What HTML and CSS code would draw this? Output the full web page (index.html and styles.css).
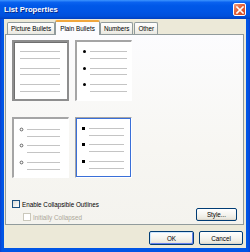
FILE: index.html
```html
<!DOCTYPE html>
<html>
<head>
<meta charset="utf-8">
<link rel="stylesheet" href="styles.css">
</head>
<body>
<div class="window">
  <div class="titlebar">
    <span class="title">List Properties</span>
    <span class="close">
      <svg width="8" height="8" viewBox="0 0 8 8"><path d="M1 1 L7 7 M7 1 L1 7" stroke="#fff" stroke-width="1.6" stroke-linecap="square"/></svg>
    </span>
  </div>
  <div class="client">
    <div class="tabs">
      <div class="tab">Picture Bullets</div>
      <div class="tab active">Plain Bullets</div>
      <div class="tab">Numbers</div>
      <div class="tab">Other</div>
    </div>
    <div class="panel">
      <div class="grid">
        <div class="box box-none">
          <svg width="53" height="57" viewBox="0 0 53 57">
            <g stroke="#c4c4c4" stroke-width="1">
              <path d="M6 9.5H46M6 16.5H46M6 26.5H46M6 32.5H46M6 42.5H46M6 49.5H46"/>
            </g>
          </svg>
        </div>
        <div class="box box-sunken">
          <svg width="54" height="58" viewBox="0 0 54 58">
            <g stroke="#c4c4c4" stroke-width="1">
              <path d="M13 9.5H50M13 16.5H50M13 26.5H50M13 32.5H50M13 42.5H50M13 49.5H50"/>
            </g>
            <g fill="#000">
              <circle cx="7.5" cy="9.5" r="1.5"/>
              <circle cx="7.5" cy="26.5" r="1.5"/>
              <circle cx="7.5" cy="42.5" r="1.5"/>
            </g>
          </svg>
        </div>
        <div class="box box-sunken">
          <svg width="54" height="58" viewBox="0 0 54 58">
            <g stroke="#c4c4c4" stroke-width="1">
              <path d="M13 10.5H46M13 17.5H46M13 26.5H46M13 33.5H46M13 43.5H46M13 50.5H46"/>
            </g>
            <g fill="none" stroke="#555" stroke-width="0.9">
              <circle cx="7.5" cy="10.5" r="1.4"/>
              <circle cx="7.5" cy="26.5" r="1.4"/>
              <circle cx="7.5" cy="43.5" r="1.4"/>
            </g>
          </svg>
        </div>
        <div class="box box-selected">
          <svg width="53" height="57" viewBox="0 0 53 57">
            <g stroke="#c4c4c4" stroke-width="1">
              <path d="M12 9.5H47M12 16.5H47M12 25.5H47M12 32.5H47M12 42.5H47M12 49.5H47"/>
            </g>
            <g fill="#000">
              <rect x="5" y="8" width="3" height="3"/>
              <rect x="5" y="24" width="3" height="3"/>
              <rect x="5" y="41" width="3" height="3"/>
            </g>
          </svg>
        </div>
      </div>
      <div class="options">
        <div class="checks">
          <label class="check"><span class="cb"></span>Enable Collapsible Outlines</label>
          <label class="check sub disabled"><span class="cb"></span>Initially Collapsed</label>
        </div>
        <button class="btn style-btn">Style...</button>
      </div>
    </div>
    <div class="actions">
      <button class="btn default">OK</button>
      <button class="btn">Cancel</button>
    </div>
  </div>
</div>
</body>
</html>
```
FILE: styles.css
```css
*, *::before, *::after {
  box-sizing: border-box;
}
html, body {
  margin: 0;
  padding: 0;
}
body {
  width: 250px;
  height: 252px;
  overflow: hidden;
  font-family: "Liberation Sans", Arial, sans-serif;
  font-size: 6.3px;
  color: #000;
}
.window {
  width: 250px;
  height: 252px;
  display: flex;
  flex-direction: column;
  background: linear-gradient(90deg, #0a3fd0 0, #0055e5 2px, #0055e5 248px, #0a3fd0 250px);
}
.titlebar {
  height: 19px;
  flex: none;
  display: flex;
  align-items: center;
  padding: 0 4px 0 4px;
  background: linear-gradient(180deg, #3d95ff 0%, #0a62f0 12%, #0058e8 30%, #0055e5 60%, #0050dc 85%, #003fc0 100%);
}
.title {
  color: #fff;
  font-weight: bold;
  font-size: 7.7px;
  text-shadow: 1px 1px 0 #0a2a8c;
}
.close {
  margin-left: auto;
  width: 13px;
  height: 13px;
  border: 1px solid #fff;
  border-radius: 2px;
  background: linear-gradient(135deg, #f3a082 0%, #e5663f 40%, #cf4420 100%);
  display: flex;
  align-items: center;
  justify-content: center;
}
.client {
  flex: 1;
  margin: 0 4px 4px 4px;
  background: #ece9d8;
  display: flex;
  flex-direction: column;
  padding: 0 2px 0 1px;
}
.tabs {
  display: flex;
  height: 15px;
  flex: none;
  padding-left: 2px;
  align-items: flex-end;
  position: relative;
  z-index: 1;
}
.tab {
  height: 12px;
  padding: 0 3px;
  display: flex;
  align-items: center;
  border: 1px solid #919b9c;
  border-bottom: none;
  border-radius: 2px 2px 0 0;
  background: linear-gradient(180deg, #ffffff 0%, #f4f3ee 60%, #e9e8e0 100%);
  margin-right: 1px;
}
.tab.active {
  height: 15px;
  margin-bottom: -1px;
  border-top: 2px solid #f1a73e;
  background: #fcfcfe;
  padding: 0 4px;
  margin-left: -1px;
  margin-right: 0;
}
.panel {
  height: 191px;
  flex: none;
  border: 1px solid #919b9c;
  background: linear-gradient(180deg, #fcfcfe 0%, #f7f6f2 60%, #f4f3ee 100%);
  padding: 5px 6px 0 6px;
  display: flex;
  flex-direction: column;
}
.grid {
  display: grid;
  grid-template-columns: 57px 57px;
  grid-template-rows: 61px 61px;
  column-gap: 6px;
  row-gap: 16px;
}
.box {
  background: #fff;
  display: flex;
}
.box-none {
  border: 2px solid #8e8e8e;
  box-shadow: inset 1px 1px 0 #6f6f6f;
}
.box-sunken {
  border-top: 2px solid #a5a5a5;
  border-left: 2px solid #a5a5a5;
  border-right: 1px solid #fff;
  border-bottom: 1px solid #fff;
}
.box-selected {
  border-top: 1px solid #a5a5a5;
  border-left: 1px solid #a5a5a5;
  border-right: 1px solid #fff;
  border-bottom: 1px solid #fff;
  padding: 0;
}
.box-selected svg {
  border: 1px solid #3a6fd8;
  width: 55px;
  height: 59px;
}
.options {
  margin-top: auto;
  display: flex;
  align-items: flex-end;
  padding-bottom: 3px;
  padding-right: 0;
}
.checks {
  display: flex;
  flex-direction: column;
  gap: 5px;
}
.check {
  display: flex;
  align-items: center;
  gap: 2px;
  height: 8px;
}
.check.sub {
  padding-left: 11px;
}
.check.disabled {
  color: #aca899;
}
.cb {
  width: 8px;
  height: 8px;
  border: 1px solid #1c5180;
  background: linear-gradient(135deg, #dcdcd7 0%, #ffffff 100%);
}
.disabled .cb {
  border-color: #cac8bb;
  background: #fff;
}
.btn {
  font-family: inherit;
  font-size: 6.3px;
  color: #000;
  height: 14px;
  padding: 0;
  border: 1px solid #003c74;
  border-radius: 2px;
  background: linear-gradient(180deg, #ffffff 0%, #f5f4ef 50%, #ebe9e0 85%, #d6d0c5 100%);
  display: flex;
  align-items: center;
  justify-content: center;
}
.style-btn {
  margin-left: auto;
  width: 41px;
  height: 13px;
}
.actions {
  display: flex;
  justify-content: flex-end;
  gap: 5px;
  margin-top: 6px;
  padding-right: 1px;
}
.actions .btn {
  width: 44px;
}
.btn.default {
  box-shadow: inset 1px 1px 0 #cee7ff, inset -1px -1px 0 #6982ee;
  width: 45px;
}
```
